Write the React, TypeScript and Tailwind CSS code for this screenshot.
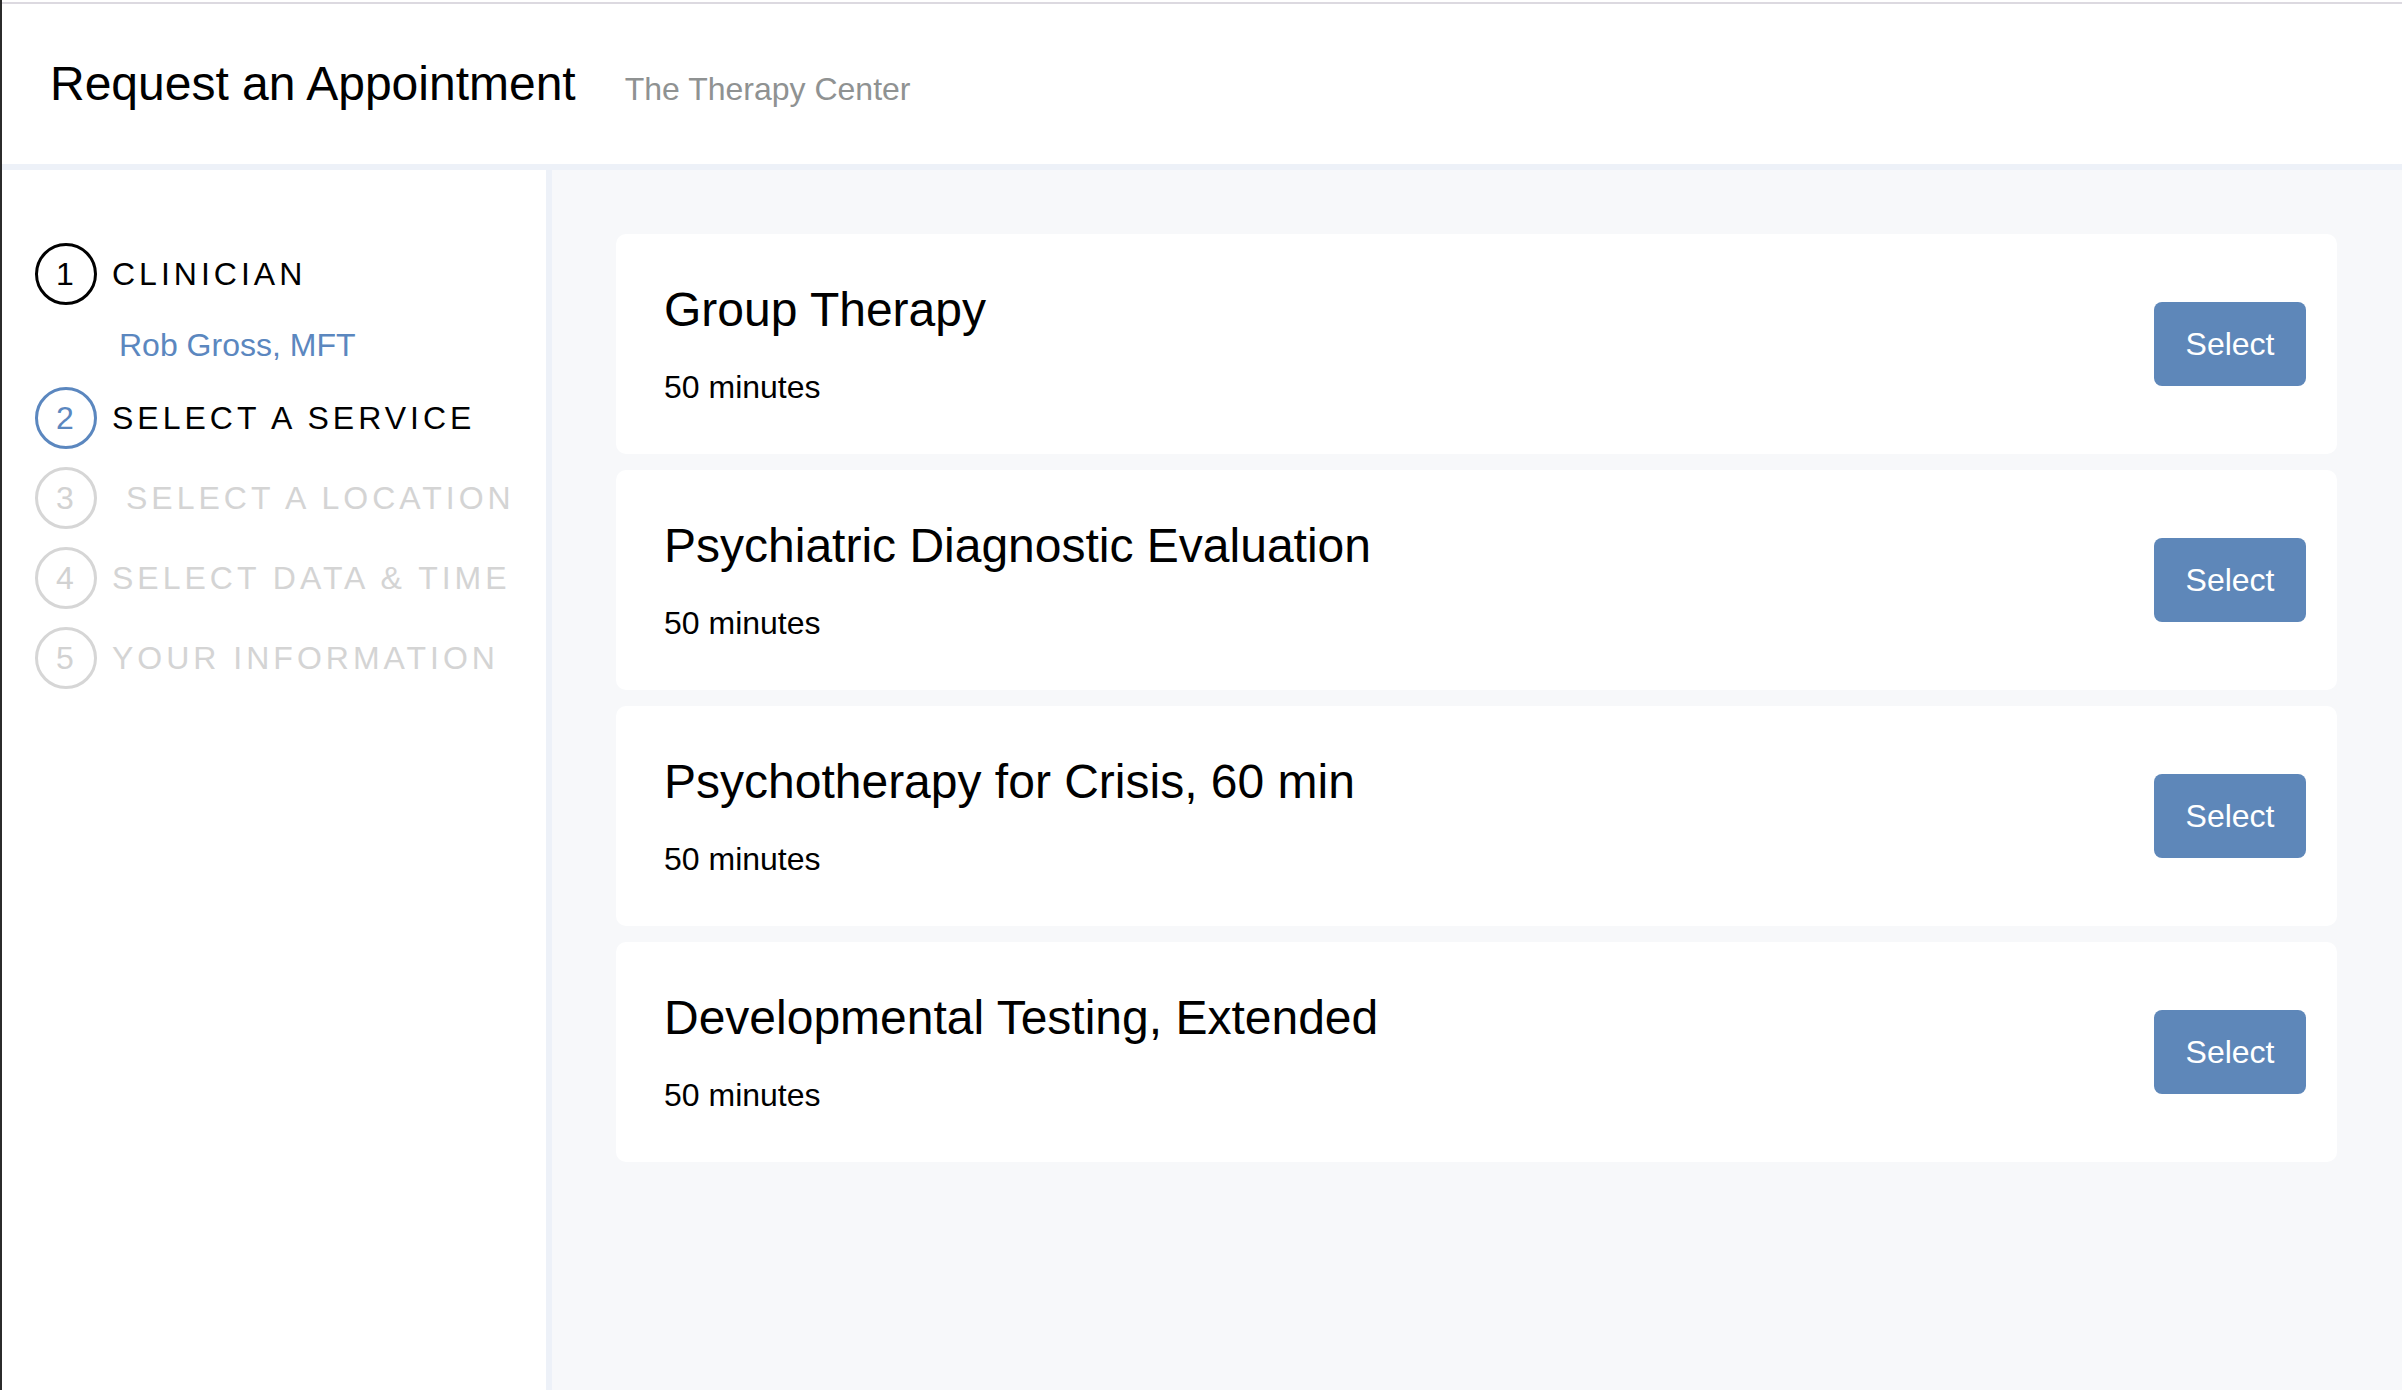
import React from "react";

const services = [
  "Group Therapy",
  "Psychiatric Diagnostic Evaluation",
  "Psychotherapy for Crisis, 60 min",
  "Developmental Testing, Extended",
];

type Step = { n: number; label: string; state: "done" | "active" | "todo"; extraPad?: boolean };

const steps: Step[] = [
  { n: 2, label: "SELECT A SERVICE", state: "active" },
  { n: 3, label: "SELECT A LOCATION", state: "todo", extraPad: true },
  { n: 4, label: "SELECT DATA & TIME", state: "todo" },
  { n: 5, label: "YOUR INFORMATION", state: "todo" },
];

function StepRow({ n, label, state, extraPad }: Step) {
  const circle =
    state === "done"
      ? "border-black text-black"
      : state === "active"
      ? "border-[#5b87bf] text-[#5b87bf]"
      : "border-[#d6d6d6] text-[#d2d2d2]";
  const text = state === "todo" ? "text-[#d4d4d4]" : "text-black";
  return (
    <div className="flex items-center h-[62px]">
      <div
        className={`w-[62px] h-[62px] rounded-full border-[3px] flex items-center justify-center text-[32px] leading-none shrink-0 pr-[2px] ${circle}`}
      >
        {n}
      </div>
      <div
        className={`ml-[15px] text-[32px] leading-[32px] tracking-[4px] whitespace-nowrap ${text} ${
          extraPad ? "pl-[14px]" : ""
        }`}
      >
        {label}
      </div>
    </div>
  );
}

export default function App() {
  return (
    <div
      className="h-screen w-full flex flex-col border-l-2 border-[#2b2b2b] bg-white overflow-hidden"
      style={{ fontFamily: '"Liberation Sans", Arial, Helvetica, sans-serif' }}
    >
      <div className="h-[2px] bg-white shrink-0" />
      <div className="h-[2px] bg-[#dcd9e0] shrink-0" />
      <header className="h-[160px] shrink-0 bg-white flex items-baseline pl-[48px] pt-[56px]">
        <h1 className="text-[48px] leading-[48px] text-black">Request an Appointment</h1>
        <span className="ml-[49px] text-[32px] leading-[32px] text-[#8f9292]">The Therapy Center</span>
      </header>
      <div className="h-[6px] bg-[#edf1f8] shrink-0" />
      <div className="flex flex-1 min-h-0">
        <aside className="w-[550px] shrink-0 bg-white border-r-[6px] border-[#edf1f8] pt-[73px] pl-[33px]">
          <StepRow n={1} label="CLINICIAN" state="done" />
          <div className="mt-[24px] ml-[84px] text-[32px] leading-[32px] text-[#5b87bf]">Rob Gross, MFT</div>
          <div className="mt-[26px] flex flex-col gap-[18px]">
            {steps.map((s) => (
              <StepRow key={s.n} {...s} />
            ))}
          </div>
        </aside>
        <main className="flex-1 bg-[#f7f8fa] pl-[64px] pr-[65px] pt-[64px] flex flex-col gap-[16px]">
          {services.map((s) => (
            <div key={s} className="h-[220px] bg-white rounded-[10px] flex items-center justify-between pl-[48px] pr-[31px]">
              <div className="self-start pt-[52px]">
                <div className="text-[48px] leading-[48px] text-black">{s}</div>
                <div className="mt-[37px] text-[32px] leading-[32px] text-black">50 minutes</div>
              </div>
              <button className="w-[152px] h-[84px] rounded-[8px] bg-[#5e87b9] text-white text-[32px] leading-none">
                Select
              </button>
            </div>
          ))}
        </main>
      </div>
    </div>
  );
}
